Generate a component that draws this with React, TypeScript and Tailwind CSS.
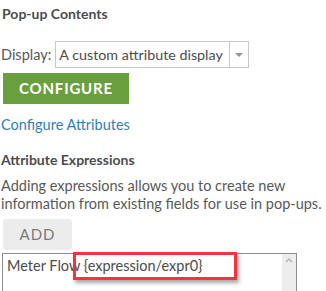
export default function App() {
  return (
    <div
      className="w-[326px] h-[291px] overflow-hidden bg-white text-[#4c4c4c]"
      style={{ fontFamily: "Lato, 'Open Sans', sans-serif" }}
    >
      <h2 className="pl-[2px] pt-[5px] text-[14px] font-bold leading-[18px] text-[#4c4c4c]">Pop-up Contents</h2>

      <div className="mt-[18px] flex items-center">
        <span className="pl-[1px] text-[14.5px] text-[#595959]">Display:</span>
        <div className="ml-[4px] flex h-[27px] w-[194px] items-stretch border border-[#c9c9c9]">
          <span className="flex-1 whitespace-nowrap pl-[3px] text-[14.3px] leading-[25px] text-[#4c4c4c]">A custom attribute display</span>
          <span className="flex w-[19px] items-center justify-center border-l border-[#c9c9c9]">
            <span className="h-0 w-0 border-x-[4px] border-t-[4px] border-x-transparent border-t-[#959595]" />
          </span>
        </div>
      </div>

      <button className="ml-[3px] mt-[5px] block h-[31px] w-[126px] bg-[#6a9f3e] text-[15px] font-bold tracking-[0.8px] text-white">
        CONFIGURE
      </button>

      <div className="mt-[12px] pl-[1px] text-[14.5px] leading-[18px] text-[#2f7fb8]">Configure Attributes</div>

      <h2 className="mt-[17px] pl-[1px] text-[14px] font-bold leading-[18px] text-[#4c4c4c]">Attribute Expressions</h2>

      <p className="mt-[8px] w-[326px] pl-[1px] text-[14.5px] leading-[18px] text-[#595959]">
        Adding expressions allows you to create new information from existing fields for use in pop-ups.
      </p>

      <button className="ml-[3px] mt-[6px] block h-[31px] w-[69px] rounded-[3px] bg-[#ececec] text-[15px] tracking-[1px] text-[#7a7a7a]">
        ADD
      </button>

      <div className="relative ml-[2px] mt-[3px] flex h-[60px] w-[295px] border border-[#8d8d8d]">
        <div className="flex-1 whitespace-nowrap pl-[4px] pt-[3px] text-[14.5px] leading-[18px] text-[#4c4c4c]">
          Meter Flow {"{expression/expr0}"}
        </div>
        <div className="flex w-[14px] justify-center bg-[#ededed] pt-[4px]">
          <svg width="8" height="5" viewBox="0 0 8 5">
            <path d="M1 4 L4 1 L7 4" fill="none" stroke="#b5b5b5" strokeWidth="1.5" />
          </svg>
        </div>
        <div className="absolute left-[70px] top-[-2px] h-[28px] w-[164px] border-[3px] border-[#f0353f] shadow-[2px_3px_4px_rgba(0,0,0,0.35)]" />
      </div>
    </div>
  );
}
